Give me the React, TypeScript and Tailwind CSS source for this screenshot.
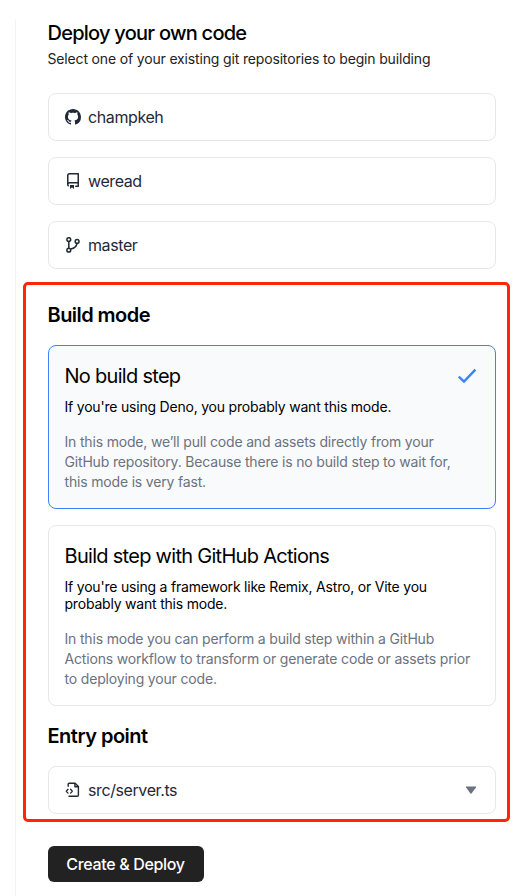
import type { ReactNode } from "react";

const FileCodeIcon = () => (
  <svg viewBox="0 0 16 16" className="size-4 fill-none stroke-current" strokeWidth="1.4" strokeLinecap="round" strokeLinejoin="round">
    <path d="M3.2 4.2V2.2c0-.6.4-1 1-1h5.9L13.4 4.5v8.8c0 .6-.4 1-1 1H4" />
    <path d="M9.9 1.5v3.3h3.3" />
    <path d="M3 7.3 1.3 9.2 3 11.1M5.6 7.3l1.7 1.9-1.7 1.9" strokeWidth="1.3" />
  </svg>
);

const GithubIcon = () => (
  <svg viewBox="0 0 16 16" className="size-4 fill-current">
    <path d="M8 0C3.58 0 0 3.58 0 8c0 3.54 2.29 6.53 5.47 7.59.4.07.55-.17.55-.38 0-.19-.01-.82-.01-1.49-2.01.37-2.53-.49-2.69-.94-.09-.23-.48-.94-.82-1.13-.28-.15-.68-.52-.01-.53.63-.01 1.08.58 1.23.82.72 1.21 1.87.87 2.33.66.07-.52.28-.87.51-1.07-1.78-.2-3.64-.89-3.64-3.95 0-.87.31-1.59.82-2.15-.08-.2-.36-1.02.08-2.12 0 0 .67-.21 2.2.82.64-.18 1.32-.27 2-.27.68 0 1.36.09 2 .27 1.53-1.04 2.2-.82 2.2-.82.44 1.1.16 1.92.08 2.12.51.56.82 1.27.82 2.15 0 3.07-1.87 3.75-3.65 3.95.29.25.54.73.54 1.48 0 1.07-.01 1.93-.01 2.2 0 .21.15.46.55.38A8.01 8.01 0 0 0 16 8c0-4.42-3.58-8-8-8z" />
  </svg>
);

const RepoIcon = () => (
  <svg viewBox="0 0 16 16" className="size-4 fill-current">
    <path fillRule="evenodd" d="M2 2.5A2.5 2.5 0 014.5 0h8.75a.75.75 0 01.75.75v12.5a.75.75 0 01-.75.75h-2.5a.75.75 0 110-1.5h1.75v-2h-8a1 1 0 00-.714 1.7.75.75 0 01-1.072 1.05A2.495 2.495 0 012 11.5v-9zm10.5-1V9h-8c-.356 0-.694.074-1 .208V2.5a1 1 0 011-1h8zM5 12.25v3.25a.25.25 0 00.4.2l1.45-1.087a.25.25 0 01.3 0L8.6 15.7a.25.25 0 00.4-.2v-3.25a.25.25 0 00-.25-.25h-3.5a.25.25 0 00-.25.25z" />
  </svg>
);

const BranchIcon = () => (
  <svg viewBox="0 0 16 16" className="size-4 fill-none stroke-current" strokeWidth="1.5">
    <circle cx="3.8" cy="2.6" r="1.9" />
    <circle cx="3.8" cy="13.2" r="1.9" />
    <circle cx="12.1" cy="4.4" r="1.9" />
    <path d="M3.8 4.5v6.8M5.7 11.9c3.6-.7 5.9-2.2 6.3-5.6" />
  </svg>
);

function Field({ icon, label, children }: { icon: ReactNode; label: string; children?: ReactNode }) {
  return (
    <div className="flex h-12 items-center rounded-lg border border-[#e5e7eb] px-4 text-[#1f2937]">
      {icon}
      <span className="ml-[7px] text-base leading-6 tracking-[-0.4px]">{label}</span>
      {children}
    </div>
  );
}

function ModeCard({ title, lead, detail, selected = false }: { title: string; lead: ReactNode; detail: ReactNode; selected?: boolean }) {
  return (
    <div className={`rounded-lg border pr-4 pl-[15.5px] ${selected ? "h-[164px] border-[#3b82f6] bg-[#f9fafb]" : "h-[181px] border-[#e5e7eb]"}`}>
      <div className="mt-4 flex items-center justify-between">
        <h3 className="text-xl leading-7 tracking-[-0.71px]">{title}</h3>
        {selected && (
          <svg viewBox="0 0 20 20" className="mr-0.5 size-5 fill-none stroke-[#3b82f6]" strokeWidth="2.4">
            <path d="M1.8 10.6 7 15.6 18.4 3.6" />
          </svg>
        )}
      </div>
      <p className="mt-2 text-sm leading-[17px] tracking-[-0.205px] whitespace-nowrap">{lead}</p>
      <p className="mt-[17px] text-sm leading-5 tracking-[-0.175px] whitespace-nowrap text-[#6b7280]">{detail}</p>
    </div>
  );
}

export default function App() {
  return (
    <div className="relative h-[896px] w-[529px] overflow-hidden bg-white pt-[19px] pl-[15px] font-['Inter',sans-serif] text-black">
      <main className="h-full border-l border-[#f3f4f6] pr-[33px] pl-8">
        <h2 className="-ml-[0.5px] text-xl leading-7 font-medium tracking-[-0.75px]">Deploy your own code</h2>
        <p className="-ml-[0.5px] mt-0.5 text-sm leading-5 tracking-[-0.16px] text-[#222]">Select one of your existing git repositories to begin building</p>
        <div className="mt-6 flex flex-col gap-4">
          <Field icon={<GithubIcon />} label="champkeh" />
          <Field icon={<RepoIcon />} label="weread" />
          <Field icon={<BranchIcon />} label="master" />
        </div>
        <h2 className="-ml-[0.5px] mt-8 text-xl leading-7 font-semibold tracking-[-0.55px]">Build mode</h2>
        <div className="mt-4 flex flex-col gap-4">
          <ModeCard
            selected
            title="No build step"
            lead="If you're using Deno, you probably want this mode."
            detail={<>In this mode, we’ll pull code and assets directly from your<br />GitHub repository. Because there is no build step to wait for,<br />this mode is very fast.</>}
          />
          <ModeCard
            title="Build step with GitHub Actions"
            lead={<>If you're using a framework like Remix, Astro, or Vite you<br />probably want this mode.</>}
            detail={<>In this mode you can perform a build step within a GitHub<br />Actions workflow to transform or generate code or assets prior<br />to deploying your code.</>}
          />
        </div>
        <h2 className="-ml-[0.5px] mt-4 mb-4 text-xl leading-7 font-semibold tracking-[-0.5px]">Entry point</h2>
        <Field icon={<FileCodeIcon />} label="src/server.ts">
          <svg viewBox="0 0 10 8" className="mr-[3px] ml-auto h-2 w-2.5 fill-[#6b7280]">
            <path d="M0 .4h10v.8L5.6 7.4H4.4L0 1.2z" />
          </svg>
        </Field>
        <button className="mt-8 h-9 w-[156px] rounded-md bg-[#222] pr-px text-base font-medium tracking-[-0.33px] text-white">Create &amp; Deploy</button>
      </main>
      <div className="pointer-events-none absolute top-[282px] left-[23px] h-[540px] w-[487px] rounded-[5px] border-3 border-[#ff2608]" />
    </div>
  );
}
